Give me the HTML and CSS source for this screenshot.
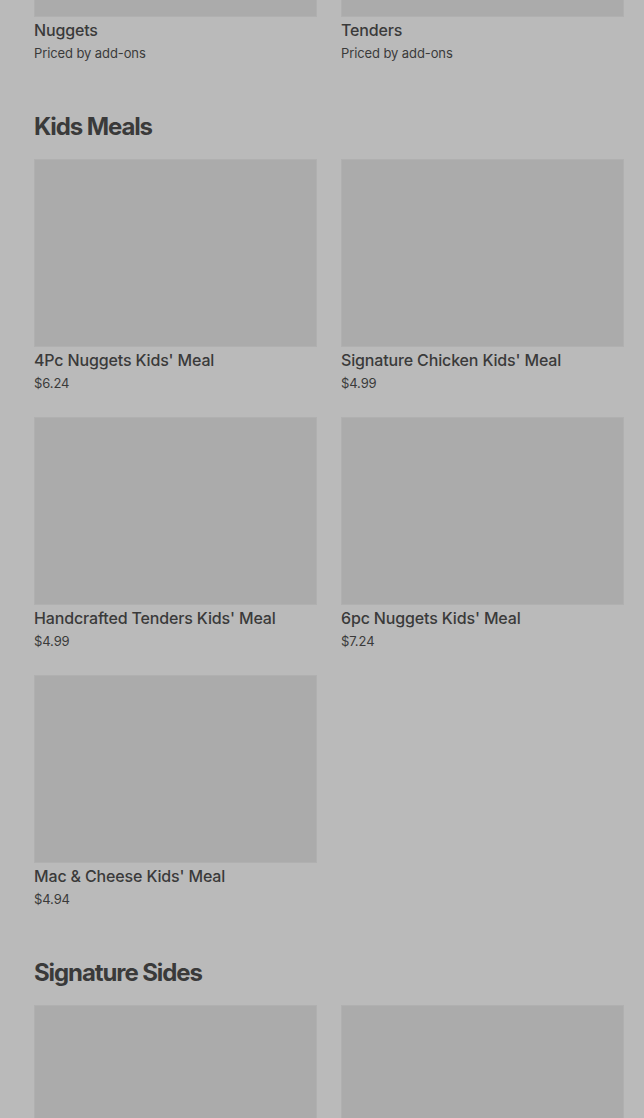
FILE: index.html
```html
<!DOCTYPE html>
<html lang="en">
<head>
    <meta charset="UTF-8">
    <meta name="viewport" content="width=device-width, initial-scale=1.0">
    <title>Menu</title>
    <link rel="stylesheet" href="styles.css">
</head>
<body>
    <div class="menu">
        <div class="section">
            <div class="grid">
                <div class="card">
                    <div class="thumb"></div>
                    <div class="name">Nuggets</div>
                    <div class="price">Priced by add-ons</div>
                </div>
                <div class="card">
                    <div class="thumb"></div>
                    <div class="name">Tenders</div>
                    <div class="price">Priced by add-ons</div>
                </div>
            </div>
        </div>

        <div class="section">
            <h2>Kids Meals</h2>
            <div class="grid">
                <div class="card">
                    <div class="thumb"></div>
                    <div class="name">4Pc Nuggets Kids' Meal</div>
                    <div class="price">$6.24</div>
                </div>
                <div class="card">
                    <div class="thumb"></div>
                    <div class="name">Signature Chicken Kids' Meal</div>
                    <div class="price">$4.99</div>
                </div>
                <div class="card">
                    <div class="thumb"></div>
                    <div class="name">Handcrafted Tenders Kids' Meal</div>
                    <div class="price">$4.99</div>
                </div>
                <div class="card">
                    <div class="thumb"></div>
                    <div class="name">6pc Nuggets Kids' Meal</div>
                    <div class="price">$7.24</div>
                </div>
                <div class="card">
                    <div class="thumb"></div>
                    <div class="name">Mac &amp; Cheese Kids' Meal</div>
                    <div class="price">$4.94</div>
                </div>
            </div>
        </div>

        <div class="section">
            <h2>Signature Sides</h2>
            <div class="grid">
                <div class="card">
                    <div class="thumb"></div>
                </div>
                <div class="card">
                    <div class="thumb"></div>
                </div>
            </div>
        </div>
    </div>
</body>
</html>
```

FILE: styles.css
```css
html, body {
    margin: 0;
    padding: 0;
    height: 100%;
    overflow: hidden;
}

body {
    background-color: #bababa;
    color: #3a3a3a;
    font-family: Inter, "Liberation Sans", sans-serif;
}

.menu {
    /* page is scrolled: the first row of images is cut at the top */
    margin-top: -171px;
    padding: 0 20px 0 34px;
}

.section {
    margin-bottom: 48px;
}

h2 {
    margin: 0 0 16px;
    font-size: 24px;
    line-height: 32px;
    font-weight: 700;
    letter-spacing: -1.1px;
}

.grid {
    display: grid;
    grid-template-columns: 1fr 1fr;
    column-gap: 24px;
    row-gap: 24px;
}

.thumb {
    height: 188px;
    background-color: #ababab;
    box-shadow: inset 0 0 0 1px #b0b0b0;
}

.name {
    margin-top: 2px;
    font-size: 16px;
    line-height: 22px;
    font-weight: 500;
    letter-spacing: -0.15px;
}

.price {
    margin-top: 2px;
    font-size: 13px;
    line-height: 20px;
    letter-spacing: -0.1px;
}
```
